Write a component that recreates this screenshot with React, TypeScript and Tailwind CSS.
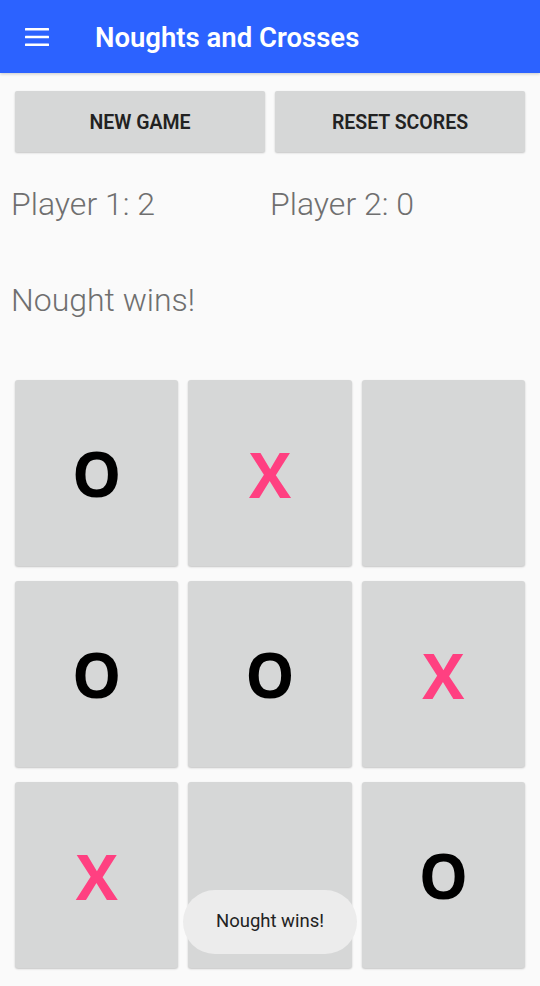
import React from 'react';

const board: string[] = ['O', 'X', '', 'O', 'O', 'X', 'X', '', 'O'];

const MenuIcon: React.FC = () => (
  <svg width="24" height="18" viewBox="0 0 24 18" fill="#ffffff">
    <rect x="0" y="0" width="24" height="2.6" rx="0.5" />
    <rect x="0" y="7.7" width="24" height="2.6" rx="0.5" />
    <rect x="0" y="15.4" width="24" height="2.6" rx="0.5" />
  </svg>
);

const App: React.FC = () => {
  return (
    <div className="relative min-h-[986px] w-full bg-[#FAFAFA] font-['Roboto',sans-serif]">
      {/* App bar */}
      <header className="flex h-[73px] items-center bg-[#2C62FF] px-[25px] shadow-[0_1px_3px_rgba(0,0,0,0.2)]">
        <MenuIcon />
        <h1 className="ml-[46px] mt-[3px] text-[27.5px] font-semibold text-white">
          Noughts and Crosses
        </h1>
      </header>

      {/* Buttons */}
      <div className="mt-[18px] flex gap-[10px] px-[15px]">
        <button className="h-[61px] flex-1 rounded-[2px] bg-[#D6D7D7] pt-[3px] text-[19.5px] font-semibold text-[#222222] shadow-[0_1px_2px_rgba(0,0,0,0.22)]">
          NEW GAME
        </button>
        <button className="h-[61px] flex-1 rounded-[2px] bg-[#D6D7D7] pt-[3px] text-[19.5px] font-semibold text-[#222222] shadow-[0_1px_2px_rgba(0,0,0,0.22)]">
          RESET SCORES
        </button>
      </div>

      {/* Scores */}
      <div className="mt-[34px] flex px-[11px] text-[32px] font-light leading-[36px] text-[#6f6f6f]">
        <div className="w-[259px]">Player 1: 2</div>
        <div>Player 2: 0</div>
      </div>

      <div className="mt-[60px] px-[11px] text-[32px] font-light leading-[36px] text-[#6f6f6f]">
        Nought wins!
      </div>

      {/* Board */}
      <div className="mt-[62px] grid grid-cols-3 gap-x-[10px] gap-y-[15px] px-[15px]">
        {board.map((cell, i) => (
          <div
            key={i}
            className="flex h-[186px] items-center justify-center rounded-[3px] bg-[#D6D7D7] shadow-[0_1px_2px_rgba(0,0,0,0.22)]"
          >
            {cell === 'O' && (
              <span className="font-['Open_Sans',sans-serif] text-[62px] font-bold leading-none text-black">O</span>
            )}
            {cell === 'X' && (
              <span className="font-['Open_Sans',sans-serif] text-[63px] font-bold leading-none text-[#FF4081]">X</span>
            )}
          </div>
        ))}
      </div>

      {/* Toast */}
      <div className="fixed bottom-[32px] left-1/2 flex h-[64px] w-[174px] -translate-x-1/2 items-center justify-center rounded-full bg-[#ECECEC] text-[18.5px] text-[#222222]">
        Nought wins!
      </div>
    </div>
  );
};

export default App;
